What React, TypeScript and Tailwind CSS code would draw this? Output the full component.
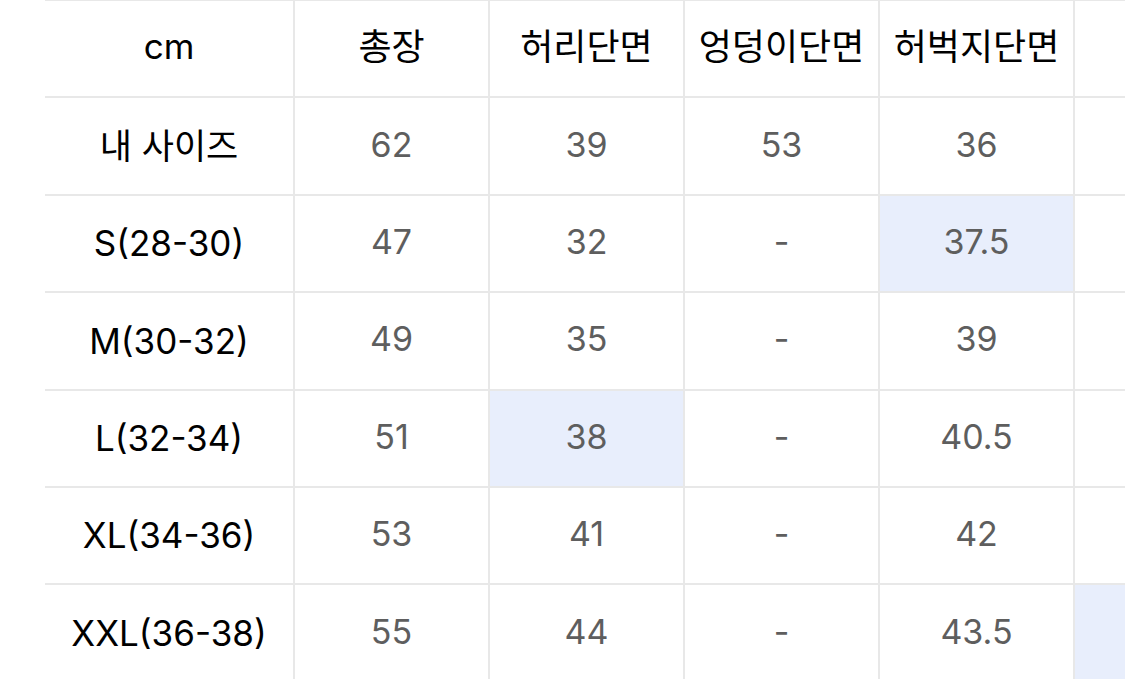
const headers = ['총장', '허리단면', '엉덩이단면', '허벅지단면', ''];

interface SizeRow {
  label: string;
  values: string[];
  highlight?: number;
}

const rows: SizeRow[] = [
  { label: '내 사이즈', values: ['62', '39', '53', '36', ''] },
  { label: 'S(28-30)', values: ['47', '32', '-', '37.5', ''], highlight: 3 },
  { label: 'M(30-32)', values: ['49', '35', '-', '39', ''] },
  { label: 'L(32-34)', values: ['51', '38', '-', '40.5', ''], highlight: 1 },
  { label: 'XL(34-36)', values: ['53', '41', '-', '42', ''] },
  { label: 'XXL(36-38)', values: ['55', '44', '-', '43.5', ''], highlight: 4 },
];

const cols = 'grid grid-cols-[250px_195px_195px_195px_195px_195px]';

export default function App() {
  return (
    <div
      className="w-[1125px] h-[679px] overflow-hidden bg-white"
      style={{ fontFamily: 'Inter, "Noto Sans CJK KR", sans-serif' }}
    >
      <div className="ml-[45px] w-[1225px] -mt-px border-t-2 border-[#e8e8e8]">
        <div className={`${cols} h-[97.4px]`}>
          <div className="flex items-center justify-center pb-1 border-b-2 border-r-2 border-[#e8e8e8] text-[35px] text-black">
            cm
          </div>
          {headers.map((h, i) => (
            <div
              key={i}
              className="flex items-center justify-center pb-1 border-b-2 border-r-2 border-[#e8e8e8] text-[36px] text-black"
            >
              {h}
            </div>
          ))}
        </div>
        {rows.map((row) => (
          <div key={row.label} className={`${cols} h-[97.4px]`}>
            <div className="flex items-center justify-center border-b-2 border-r-2 border-[#e8e8e8] text-[35px] text-black">
              {row.label}
            </div>
            {row.values.map((v, i) => (
              <div
                key={i}
                className={`flex items-center justify-center pb-1 border-b-2 border-r-2 border-[#e8e8e8] text-[34px] text-[#5e5e5e] ${
                  row.highlight === i ? 'bg-[#e8eefc]' : 'bg-white'
                }`}
              >
                {v}
              </div>
            ))}
          </div>
        ))}
      </div>
    </div>
  );
}
